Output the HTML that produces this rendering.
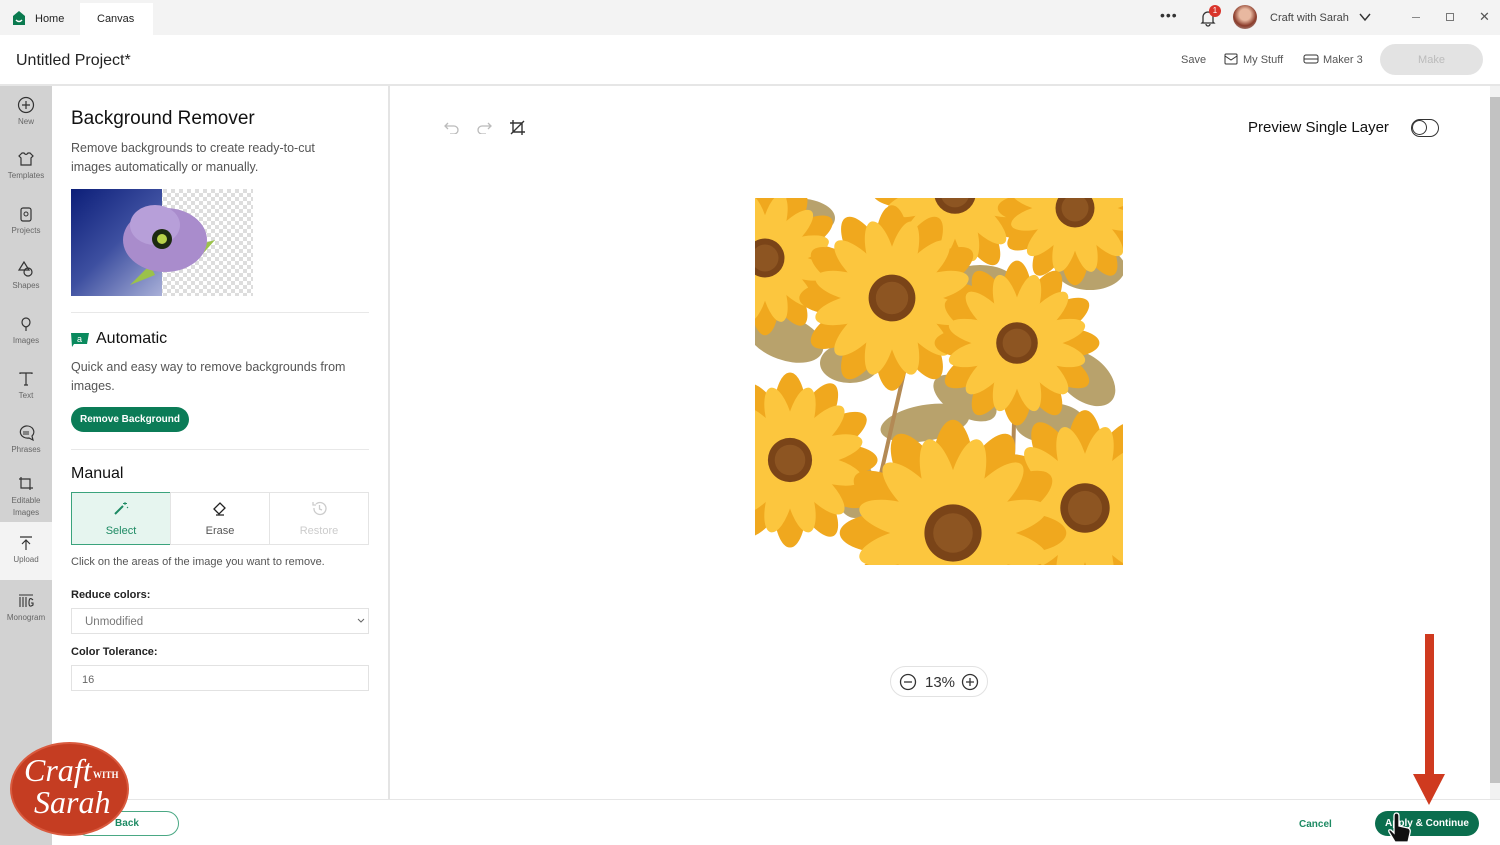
<!DOCTYPE html>
<html><head><meta charset="utf-8"><style>
*{box-sizing:border-box;margin:0;padding:0}
body{width:1500px;height:845px;overflow:hidden;background:#fff;font-family:"Liberation Sans",sans-serif;color:#222;position:relative}
.abs{position:absolute}
.t{position:absolute;white-space:nowrap}
.side{position:absolute;left:0;top:86px;width:52px;height:759px;background:#d2d2d2}
.si{position:absolute;left:0;width:52px;text-align:center;font-size:8px;color:#666}
.si svg{display:block;margin:0 auto 3px}
.btn3{position:absolute;top:492px;height:53px;border:1px solid #e4e4e4;text-align:center;font-size:11px;color:#555;padding-top:32px}
</style></head><body>
<!-- top bar -->
<div class="abs" style="left:0;top:0;width:1500px;height:35px;background:#f3f3f3"></div>
<div class="abs" style="left:80px;top:3px;width:73px;height:32px;background:#fff"></div>
<svg class="abs" style="left:12px;top:11px" width="14" height="14" viewBox="0 0 14 14"><path d="M7 0L13 5V14H1V5Z" fill="#0a7a4f"/><path d="M4 9Q7 12 10 9" stroke="#fff" stroke-width="1.5" fill="none"/></svg>
<div class="t" style="left:35px;top:13px;font-size:11px;color:#222">Home</div>
<div class="t" style="left:97px;top:13px;font-size:11px;color:#222">Canvas</div>
<div class="t" style="left:1160px;top:7px;font-size:14px;color:#333;letter-spacing:1px">•••</div>
<svg class="abs" style="left:1199px;top:9px" width="18" height="18" viewBox="0 0 18 18"><path d="M4 13V8a5 5 0 0 1 10 0v5l1 1H3z M7 15a2 2 0 0 0 4 0" stroke="#333" stroke-width="1.3" fill="none"/></svg>
<div class="abs" style="left:1209px;top:5px;width:12px;height:12px;border-radius:6px;background:#d9342b;color:#fff;font-size:8px;text-align:center;line-height:12px">1</div>
<div class="abs" style="left:1233px;top:5px;width:24px;height:24px;border-radius:12px;background:radial-gradient(circle at 50% 40%,#e8b8a0 30%,#8a3b2a 60%,#bbb 100%)"></div>
<div class="t" style="left:1270px;top:12px;font-size:11px;color:#444">Craft with Sarah</div>
<svg class="abs" style="left:1359px;top:13px" width="12" height="9"><path d="M1 1L6 7L11 1" stroke="#333" stroke-width="1.4" fill="none"/></svg>
<div class="abs" style="left:1412px;top:17px;width:8px;height:1px;background:#888"></div>
<div class="abs" style="left:1446px;top:13px;width:8px;height:8px;border:1px solid #777"></div>
<div class="t" style="left:1479px;top:9px;font-size:13px;color:#555">✕</div>
<!-- header -->
<div class="abs" style="left:0;top:84px;width:1500px;height:2px;background:#e6e6e6"></div>
<div class="t" style="left:16px;top:52px;font-size:16px;color:#222">Untitled Project*</div>
<div class="t" style="left:1181px;top:54px;font-size:11px;color:#555">Save</div>
<svg class="abs" style="left:1224px;top:53px" width="14" height="12"><rect x="1" y="1" width="12" height="10" rx="1" stroke="#333" fill="none"/><path d="M1 3L7 7L13 3" stroke="#333" fill="none"/></svg>
<div class="t" style="left:1243px;top:54px;font-size:11px;color:#555">My Stuff</div>
<svg class="abs" style="left:1303px;top:54px" width="16" height="10"><rect x="1" y="1" width="14" height="8" rx="2" stroke="#333" fill="none"/><path d="M1 5H15" stroke="#333"/></svg>
<div class="t" style="left:1323px;top:54px;font-size:11px;color:#555">Maker 3</div>
<div class="abs" style="left:1380px;top:44px;width:103px;height:31px;border-radius:16px;background:#e3e3e3;color:#bbb;font-size:11px;text-align:center;line-height:33px">Make</div>
<!-- sidebar -->
<div class="side"></div>
<div class="abs" style="left:0;top:522px;width:52px;height:58px;background:#f3f3f3"></div>
<div class="si" style="top:96px"><svg width="18" height="18"><circle cx="9" cy="9" r="7.5" stroke="#333" fill="none" stroke-width="1.2"/><path d="M9 5V13M5 9H13" stroke="#333" stroke-width="1.2"/></svg>New</div>
<div class="si" style="top:150px"><svg width="18" height="18"><path d="M5 3L2 6L4 8V15H14V8L16 6L13 3H11Q9 6 7 3Z" stroke="#333" fill="none" stroke-width="1.2"/></svg>Templates</div>
<div class="si" style="top:205px"><svg width="18" height="18"><rect x="4" y="3" width="10" height="13" rx="2" stroke="#333" fill="none" stroke-width="1.2"/><circle cx="9" cy="9" r="2" stroke="#333" fill="none"/></svg>Projects</div>
<div class="si" style="top:260px"><svg width="18" height="18"><path d="M7 2L2 10H12Z" stroke="#333" fill="none" stroke-width="1.2"/><circle cx="11" cy="12" r="4" stroke="#333" fill="none" stroke-width="1.2"/></svg>Shapes</div>
<div class="si" style="top:315px"><svg width="18" height="18"><path d="M9 16V12M5 7a4 4 0 0 1 8 0Q13 11 9 12Q5 11 5 7Z" stroke="#333" fill="none" stroke-width="1.2"/></svg>Images</div>
<div class="si" style="top:370px"><svg width="18" height="18"><path d="M3 4V3H15V4M9 3V15M7 15H11" stroke="#333" fill="none" stroke-width="1.2"/></svg>Text</div>
<div class="si" style="top:424px"><svg width="18" height="18"><path d="M9 2a7 6 0 1 0 3 12L16 16L15 12A7 6 0 0 0 9 2Z" stroke="#333" fill="none" stroke-width="1.2"/><path d="M6 8H12M6 10H12" stroke="#333"/></svg>Phrases</div>
<div class="si" style="top:474px;line-height:12px"><svg width="18" height="18"><path d="M4 3V14H16M2 5H13V16" stroke="#333" fill="none" stroke-width="1.2"/></svg>Editable<br>Images</div>
<div class="si" style="top:534px"><svg width="18" height="18"><path d="M3 3H15M9 16V6M5 10L9 6L13 10" stroke="#333" fill="none" stroke-width="1.2"/></svg>Upload</div>
<div class="si" style="top:592px"><svg width="18" height="18"><path d="M2 3H16M3 5V15M6 5V15M9 5V15M16 8Q12 4 12 11Q12 16 16 13V11H14" stroke="#333" fill="none" stroke-width="1.1"/></svg>Monogram</div>
<!-- panel -->
<div class="abs" style="left:388px;top:86px;width:2px;height:714px;background:#e4e4e4"></div>
<div class="t" style="left:71px;top:108px;font-size:19px;color:#111">Background Remover</div>
<div class="t" style="left:71px;top:139px;font-size:12.5px;color:#555;line-height:19px">Remove backgrounds to create ready-to-cut<br>images automatically or manually.</div>
<div class="abs" style="left:71px;top:189px;width:182px;height:107px;background:repeating-conic-gradient(#ddd 0 25%,#fff 0 50%) 0 0/8px 8px"></div>
<div class="abs" style="left:71px;top:189px;width:91px;height:107px;background:linear-gradient(135deg,#0c1e78,#3d4fa0 50%,#a9b0d8)"></div>
<svg class="abs" style="left:110px;top:195px" width="115" height="95" viewBox="0 0 115 95"><path d="M70 55L105 45L90 62Z M40 70L20 90L45 80Z" fill="#9bc24a"/><ellipse cx="55" cy="45" rx="42" ry="32" fill="#a98ccc"/><ellipse cx="45" cy="30" rx="25" ry="20" fill="#b79fd9"/><circle cx="52" cy="44" r="10" fill="#1c2a10"/><circle cx="52" cy="44" r="5" fill="#b7d24a"/></svg>
<div class="abs" style="left:71px;top:312px;width:298px;height:1px;background:#e8e8e8"></div>
<svg class="abs" style="left:71px;top:331px" width="18" height="16"><path d="M0 2H18L16 13H3L1 16Z" fill="#0a8a5e"/><text x="6" y="11" font-size="9" fill="#fff" font-family="Liberation Sans">a</text></svg>
<div class="t" style="left:96px;top:330px;font-size:16px;color:#111">Automatic</div>
<div class="t" style="left:71px;top:358px;font-size:12.5px;color:#555;line-height:19px">Quick and easy way to remove backgrounds from<br>images.</div>
<div class="abs" style="left:71px;top:407px;width:118px;height:25px;border-radius:13px;background:#0b7c57;color:#fff;font-size:10px;font-weight:bold;text-align:center;line-height:26px">Remove Background</div>
<div class="abs" style="left:71px;top:449px;width:298px;height:1px;background:#e8e8e8"></div>
<div class="t" style="left:71px;top:465px;font-size:16px;color:#111">Manual</div>
<div class="btn3" style="left:71px;width:100px;background:#e6f5ef;border:1.5px solid #3aa37c;color:#1d8a63">Select</div>
<svg class="abs" style="left:113px;top:500px" width="16" height="16"><path d="M2 14L10 6" stroke="#1d8a63" stroke-width="2"/><path d="M12 2V5M10 3.5H14M14 7l1 1" stroke="#1d8a63"/></svg>
<div class="btn3" style="left:170px;width:100px">Erase</div>
<svg class="abs" style="left:211px;top:500px" width="16" height="16"><path d="M3 9L9 3L14 8L8 14Z M3 9L6 12M5 15H13" stroke="#222" stroke-width="1.3" fill="none"/></svg>
<div class="btn3" style="left:269px;width:100px;color:#ccc">Restore</div>
<svg class="abs" style="left:311px;top:500px" width="17" height="17"><path d="M3 8a6 6 0 1 0 2-4M2 2V5H5M8.5 5V9L11 10" stroke="#ccc" stroke-width="1.3" fill="none"/></svg>
<div class="t" style="left:71px;top:556px;font-size:11px;color:#555">Click on the areas of the image you want to remove.</div>
<div class="t" style="left:71px;top:589px;font-size:11px;color:#222;font-weight:bold">Reduce colors:</div>
<div class="abs" style="left:71px;top:608px;width:298px;height:26px;border:1px solid #e2e2e2;font-size:11.5px;color:#777;padding:7px 0 0 13px">Unmodified</div>
<svg class="abs" style="left:357px;top:618px" width="8" height="6"><path d="M1 1L4 4L7 1" stroke="#666" fill="none"/></svg>
<div class="t" style="left:71px;top:646px;font-size:11px;color:#222;font-weight:bold">Color Tolerance:</div>
<div class="abs" style="left:71px;top:665px;width:298px;height:26px;border:1px solid #e2e2e2;font-size:11px;color:#666;padding:8px 0 0 10px">16</div>
<!-- canvas tools -->
<svg class="abs" style="left:443px;top:120px" width="18" height="14"><path d="M5 3L2 6L5 9M2 6H11a4 4 0 0 1 0 8H7" stroke="#bbb" stroke-width="1.3" fill="none"/></svg>
<svg class="abs" style="left:475px;top:120px" width="18" height="14"><path d="M13 3L16 6L13 9M16 6H7a4 4 0 0 0 0 8H11" stroke="#bbb" stroke-width="1.3" fill="none"/></svg>
<svg class="abs" style="left:509px;top:119px" width="17" height="17"><path d="M4 1V13H16M1 4H13V16M2 15L15 2" stroke="#333" stroke-width="1.4" fill="none"/></svg>
<div class="t" style="left:1248px;top:119px;font-size:15px;color:#111">Preview Single Layer</div>
<div class="abs" style="left:1411px;top:119px;width:28px;height:18px;border-radius:9px;border:1.5px solid #333"></div>
<div class="abs" style="left:1412px;top:120px;width:15px;height:15px;border-radius:8px;border:1.5px solid #333"></div>
<!-- image -->
<svg class="abs" style="left:755px;top:198px" width="368" height="367" viewBox="0 0 368 367">
<defs>
<g id="fl"><g fill="#f0a81e"><ellipse cx="0" cy="-55" rx="19" ry="48"/><ellipse cx="0" cy="-55" rx="19" ry="48" transform="rotate(30)"/><ellipse cx="0" cy="-55" rx="19" ry="48" transform="rotate(60)"/><ellipse cx="0" cy="-55" rx="19" ry="48" transform="rotate(90)"/><ellipse cx="0" cy="-55" rx="19" ry="48" transform="rotate(120)"/><ellipse cx="0" cy="-55" rx="19" ry="48" transform="rotate(150)"/><ellipse cx="0" cy="-55" rx="19" ry="48" transform="rotate(180)"/><ellipse cx="0" cy="-55" rx="19" ry="48" transform="rotate(210)"/><ellipse cx="0" cy="-55" rx="19" ry="48" transform="rotate(240)"/><ellipse cx="0" cy="-55" rx="19" ry="48" transform="rotate(270)"/><ellipse cx="0" cy="-55" rx="19" ry="48" transform="rotate(300)"/><ellipse cx="0" cy="-55" rx="19" ry="48" transform="rotate(330)"/></g>
<g fill="#fcc63e"><ellipse cx="0" cy="-48" rx="15" ry="40" transform="rotate(15)"/><ellipse cx="0" cy="-48" rx="15" ry="40" transform="rotate(45)"/><ellipse cx="0" cy="-48" rx="15" ry="40" transform="rotate(75)"/><ellipse cx="0" cy="-48" rx="15" ry="40" transform="rotate(105)"/><ellipse cx="0" cy="-48" rx="15" ry="40" transform="rotate(135)"/><ellipse cx="0" cy="-48" rx="15" ry="40" transform="rotate(165)"/><ellipse cx="0" cy="-48" rx="15" ry="40" transform="rotate(195)"/><ellipse cx="0" cy="-48" rx="15" ry="40" transform="rotate(225)"/><ellipse cx="0" cy="-48" rx="15" ry="40" transform="rotate(255)"/><ellipse cx="0" cy="-48" rx="15" ry="40" transform="rotate(285)"/><ellipse cx="0" cy="-48" rx="15" ry="40" transform="rotate(315)"/><ellipse cx="0" cy="-48" rx="15" ry="40" transform="rotate(345)"/></g>
<circle r="26" fill="#7a4418"/><circle r="18" fill="#8d5522"/></g>
</defs>
<rect width="368" height="367" fill="#fff"/>
<g fill="#b8a26c"><ellipse cx="30" cy="140" rx="40" ry="22" transform="rotate(20 30 140)"/><ellipse cx="95" cy="165" rx="30" ry="20"/><ellipse cx="170" cy="225" rx="45" ry="18" transform="rotate(-10 170 225)"/><ellipse cx="225" cy="85" rx="35" ry="18"/><ellipse cx="335" cy="70" rx="35" ry="22"/><ellipse cx="330" cy="180" rx="35" ry="22" transform="rotate(40 330 180)"/><ellipse cx="210" cy="200" rx="35" ry="18" transform="rotate(30 210 200)"/><ellipse cx="295" cy="225" rx="35" ry="20"/><ellipse cx="40" cy="20" rx="40" ry="20"/><ellipse cx="100" cy="290" rx="20" ry="30"/></g>
<path d="M150 170L125 280M260 190L258 260" stroke="#b38a55" stroke-width="4"/>
<use href="#fl" transform="translate(200 -5) scale(0.8)"/>
<use href="#fl" transform="translate(320 10) scale(0.75)"/>
<use href="#fl" transform="translate(10 60) scale(0.75)"/>
<use href="#fl" transform="translate(137 100) scale(0.9)"/>
<use href="#fl" transform="translate(262 145) scale(0.8)"/>
<use href="#fl" transform="translate(35 262) scale(0.85)"/>
<use href="#fl" transform="translate(330 310) scale(0.95)"/>
<use href="#fl" transform="translate(198 335) scale(1.1)"/>
</svg>
<!-- zoom -->
<div class="abs" style="left:890px;top:666px;width:98px;height:31px;border-radius:16px;border:1.5px solid #e2e2e2"></div>
<svg class="abs" style="left:899px;top:673px" width="18" height="18"><circle cx="9" cy="9" r="7.5" stroke="#333" fill="none" stroke-width="1.3"/><path d="M5 9H13" stroke="#333" stroke-width="1.3"/></svg>
<div class="t" style="left:925px;top:674px;font-size:15px;color:#333">13%</div>
<svg class="abs" style="left:961px;top:673px" width="18" height="18"><circle cx="9" cy="9" r="7.5" stroke="#333" fill="none" stroke-width="1.3"/><path d="M5 9H13M9 5V13" stroke="#333" stroke-width="1.3"/></svg>
<!-- scrollbar -->
<div class="abs" style="left:1490px;top:86px;width:10px;height:714px;background:#f2f2f2"></div>
<div class="abs" style="left:1490px;top:97px;width:10px;height:686px;background:#c2c2c2"></div>
<!-- bottom -->
<div class="abs" style="left:52px;top:799px;width:1448px;height:1px;background:#e6e6e6"></div>
<div class="abs" style="left:75px;top:811px;width:104px;height:25px;border-radius:13px;border:1.5px solid #4aa884;color:#1d8a63;font-size:10px;font-weight:bold;text-align:center;line-height:24px">Back</div>
<div class="t" style="left:1299px;top:819px;font-size:10px;font-weight:bold;color:#1d8a63">Cancel</div>
<div class="abs" style="left:1375px;top:811px;width:104px;height:25px;border-radius:13px;background:#0b6e4e;color:#fff;font-size:10px;font-weight:bold;text-align:center;line-height:26px">Apply &amp; Continue</div>
<svg class="abs" style="left:1386px;top:812px" width="28" height="33"><path d="M9 30L3 20Q2 17 5 18L8 21V4Q8 1 10.5 1Q13 1 13 4V14L22 16Q25 17 24 21L22 30Z" fill="#111" stroke="#fff" stroke-width="1.3"/></svg>
<!-- arrow -->
<div class="abs" style="left:1425px;top:634px;width:9px;height:144px;background:#cf3a1f"></div>
<svg class="abs" style="left:1413px;top:774px" width="32" height="31"><path d="M0 0H32L16 31Z" fill="#cf3a1f"/></svg>
<!-- logo -->
<div class="abs" style="left:10px;top:742px;width:119px;height:94px;border-radius:50%;background:#c53d22;border:2px solid #d95a3e"></div>
<div class="t" style="left:24px;top:752px;font-family:'Liberation Serif',serif;font-style:italic;font-size:32px;color:#fff">Craft</div>
<div class="t" style="left:93px;top:770px;font-family:'Liberation Serif',serif;font-size:9px;color:#fff;font-weight:bold">WITH</div>
<div class="t" style="left:34px;top:784px;font-family:'Liberation Serif',serif;font-style:italic;font-size:32px;color:#fff">Sarah</div>
</body></html>
